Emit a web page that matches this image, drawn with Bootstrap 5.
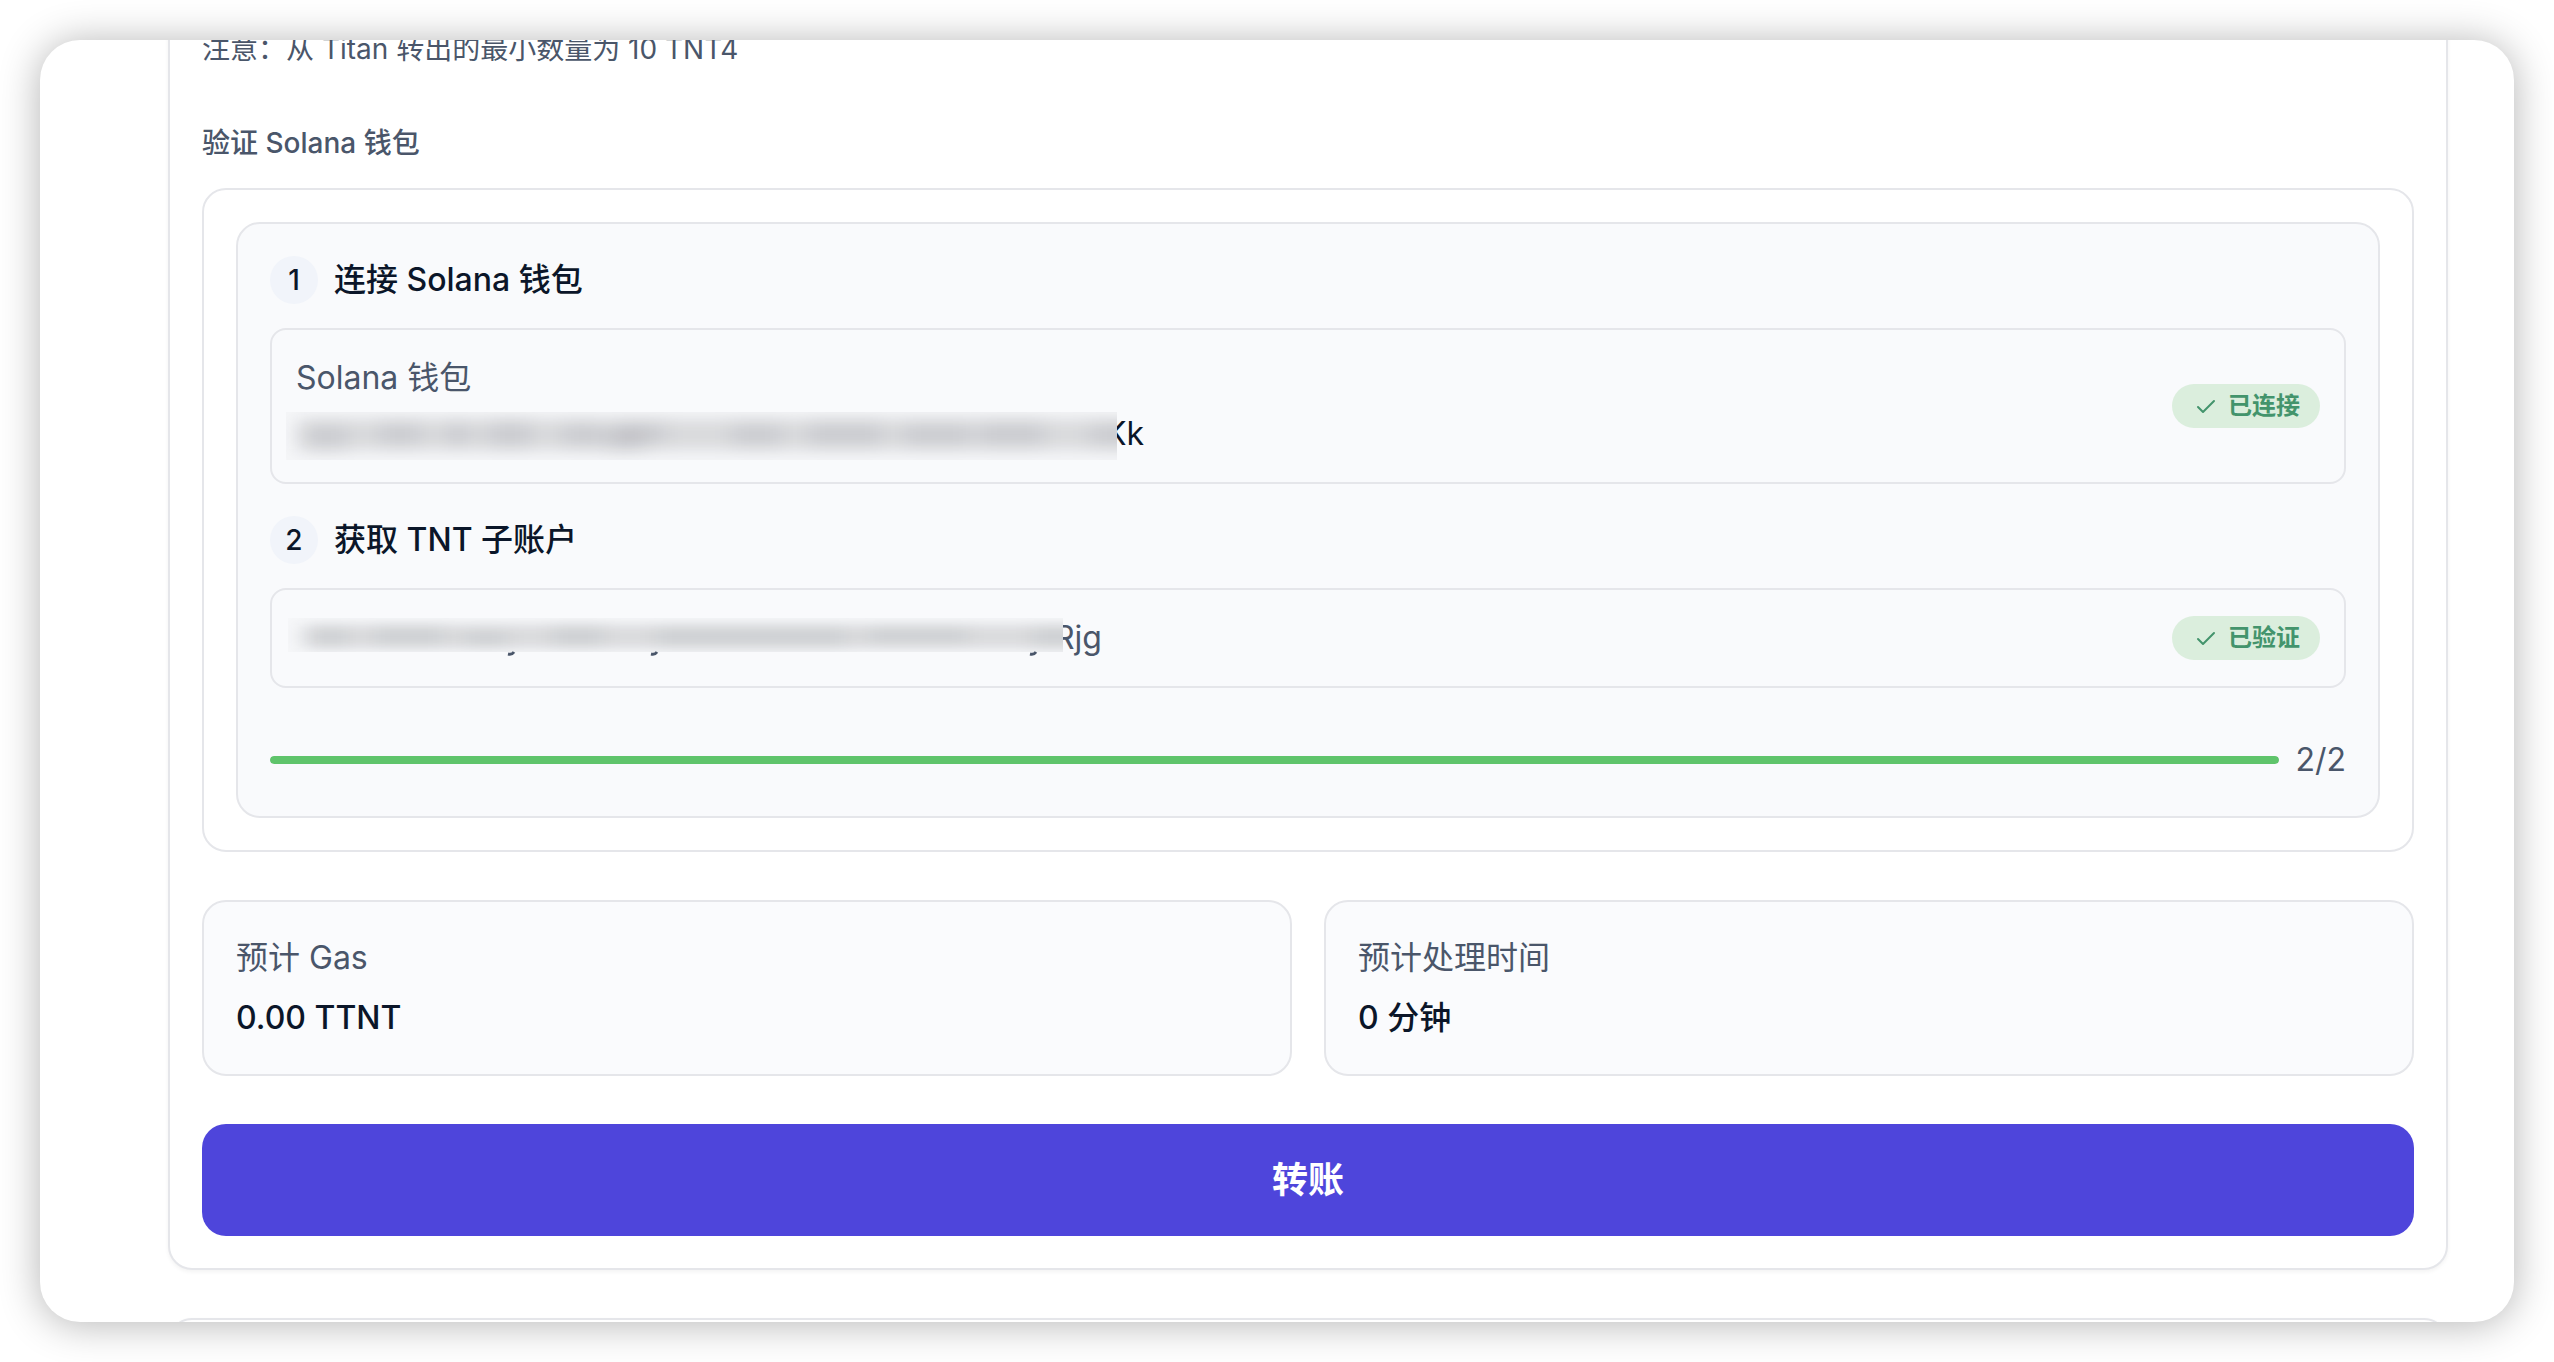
<!DOCTYPE html>
<html lang="zh-CN">
<head>
<meta charset="utf-8">
<meta name="viewport" content="width=device-width, initial-scale=1">
<title>Titan Bridge</title>
<link href="https://cdn.jsdelivr.net/npm/bootstrap@5.3.0/dist/css/bootstrap.min.css" rel="stylesheet">
<style>
  :root { --ink: #0b1629; --slate: #4a566a; --line: #e5e6ea; --soft: #f9fafc; }
  body { background: #fff; color: var(--ink); font-family: Inter, "Noto Sans CJK SC", sans-serif; font-size: 32px; line-height: 48px; }
  .window { height: calc(100vh - 80px); margin: 40px; border-radius: 40px; background: #fff; box-shadow: 0 2px 40px rgba(0,0,0,.3); padding: 0 66px 0 128px; }
  /* the page inside the window is scrolled a little way down */
  .scrolled { margin-top: -46px; gap: 48px; }
  .panel, .frame, .tile { border: 2px solid var(--line); border-radius: 24px; padding: 32px; }
  .panel { background: #fff; box-shadow: 0 2px 4px rgba(0,0,0,.05); }
  .tint { background: var(--soft); }
  .slate { color: var(--slate); }
  .note, .caption-line { font-size: 28px; line-height: 42px; color: var(--slate); margin: 0; }
  .note { margin-bottom: 52px; }
  .caption-line { font-weight: 500; margin-bottom: 24px; }
  .stack { gap: 24px; }
  .stack + .stack { margin-top: 32px; }
  .step-head { gap: 16px; }
  .step-head h2 { font-size: 32px; line-height: 48px; font-weight: 500; margin: 0; }
  .step-no { width: 48px; height: 48px; border-radius: 50%; background: #f1f4fa; font-size: 28px; font-weight: 500; }
  .field { border: 2px solid var(--line); border-radius: 16px; padding: 24px; }
  .field-lines { gap: 8px; }
  .state { background: #dbeedd; color: #43946c; font-size: 24px; line-height: 44px; font-weight: 700; border-radius: 22px; padding: 0 20px; gap: 8px; }
  .masked { height: 48px; margin-left: -10px; }
  .masked svg { position: relative; z-index: 1; flex: none; }
  .mask-wide { margin: 2px -12px -2px 0; }
  .mask-slim { margin: 4px -9px 0 2px; }
  .meter { gap: 16px; margin-top: 48px; }
  .meter .progress { height: 8px; border-radius: 4px; background: #e5e6ea; }
  .meter .progress-bar { background: #5fc46b; border-radius: 4px; }
  .tiles { gap: 32px; margin: 48px 0; }
  .tile { flex: 1 1 0; background: #fafbfd; }
  .tile dt { font-weight: 400; color: var(--slate); margin-bottom: 12px; }
  .tile dd { font-weight: 500; margin: 0; }
  .btn-transfer { --bs-btn-color: #fff; --bs-btn-bg: #4e45db; --bs-btn-hover-color: #fff; --bs-btn-hover-bg: #4338ca; --bs-btn-border-width: 0; --bs-btn-border-radius: 24px; font-size: 36px; line-height: 56px; font-weight: 700; padding: 28px; }
</style>
</head>
<body class="overflow-hidden">
<div class="window overflow-hidden">
  <main class="scrolled d-flex flex-column">
    <section class="panel">
      <p class="note">注意：从 Titan 转出的最小数量为 10 TNT4</p>
      <h1 class="caption-line">验证 Solana 钱包</h1>
      <div class="frame">
        <div class="frame tint">
          <section class="stack d-flex flex-column">
            <div class="step-head d-flex align-items-center">
              <span class="step-no d-flex align-items-center justify-content-center">1</span>
              <h2>连接 Solana 钱包</h2>
            </div>
            <div class="field d-flex align-items-center justify-content-between">
              <div class="field-lines d-flex flex-column">
                <span class="slate">Solana 钱包</span>
                <span class="masked d-flex">
                  <svg class="mask-wide" width="831" height="48" viewBox="0 0 831 48" aria-hidden="true">
                    <defs><filter id="fogA" filterUnits="userSpaceOnUse" x="-40" y="-40" width="960" height="130" color-interpolation-filters="sRGB"><feGaussianBlur stdDeviation="10 8"/></filter></defs>
                    <rect width="831" height="48" fill="#f5f6f8"/>
                    <g filter="url(#fogA)" fill="#16171f">
                      <rect x="12" y="8" width="880" height="29" fill-opacity=".13"/>
                      <g fill-opacity=".06">
                        <rect x="18" y="12" width="44" height="29"/><rect x="92" y="9" width="44" height="26"/>
                        <rect x="160" y="9" width="24" height="26"/><rect x="202" y="7" width="44" height="30"/>
                        <rect x="276" y="10" width="40" height="26"/><rect x="318" y="16" width="40" height="26"/>
                        <rect x="330" y="9" width="50" height="24"/><rect x="446" y="10" width="50" height="26"/>
                        <rect x="522" y="8" width="74" height="28"/><rect x="618" y="10" width="66" height="26"/>
                        <rect x="694" y="8" width="64" height="28"/><rect x="804" y="10" width="70" height="26"/>
                      </g>
                    </g>
                  </svg><span>Kk</span>
                </span>
              </div>
              <span class="state d-flex align-items-center">
                <svg width="28" height="28" viewBox="0 0 28 28" fill="none" stroke="currentColor" stroke-width="2" stroke-linecap="round" stroke-linejoin="round" aria-hidden="true"><path d="M6 15l5 5L22 9"/></svg>已连接</span>
            </div>
          </section>
          <section class="stack d-flex flex-column">
            <div class="step-head d-flex align-items-center">
              <span class="step-no d-flex align-items-center justify-content-center">2</span>
              <h2>获取 TNT 子账户</h2>
            </div>
            <div class="field d-flex align-items-center justify-content-between">
              <span class="masked slate d-flex">
                <svg class="mask-slim" width="775" height="40" viewBox="0 0 775 40" aria-hidden="true">
                  <defs><filter id="fogB" filterUnits="userSpaceOnUse" x="-40" y="-40" width="900" height="120" color-interpolation-filters="sRGB"><feGaussianBlur stdDeviation="10 6"/></filter><clipPath id="slimClip"><rect width="775" height="34"/></clipPath></defs>
                  <g clip-path="url(#slimClip)">
                    <rect width="775" height="34" fill="#f6f7f9"/>
                    <g filter="url(#fogB)" fill="#1c2029">
                      <rect x="15" y="7" width="830" height="23" fill-opacity=".13"/>
                      <g fill-opacity=".05">
                        <rect x="24" y="8" width="36" height="22"/><rect x="86" y="7" width="70" height="22"/>
                        <rect x="176" y="12" width="44" height="18"/><rect x="264" y="6" width="52" height="24"/>
                        <rect x="368" y="8" width="190" height="22"/><rect x="580" y="8" width="100" height="18"/>
                        <rect x="744" y="7" width="60" height="24"/>
                      </g>
                    </g>
                  </g>
                  <path d="M220 36q4 1 6-2M363 36q4 1 6-2M742 36q4 1 6-2" fill="none" stroke="currentColor" stroke-width="3"/>
                </svg><span>Rjg</span>
              </span>
              <span class="state d-flex align-items-center">
                <svg width="28" height="28" viewBox="0 0 28 28" fill="none" stroke="currentColor" stroke-width="2" stroke-linecap="round" stroke-linejoin="round" aria-hidden="true"><path d="M6 15l5 5L22 9"/></svg>已验证</span>
            </div>
          </section>
          <div class="meter d-flex align-items-center">
            <div class="progress flex-grow-1" role="progressbar" aria-label="进度" aria-valuenow="2" aria-valuemin="0" aria-valuemax="2"><div class="progress-bar" style="width:100%"></div></div>
            <span class="slate">2/2</span>
          </div>
        </div>
      </div>
      <div class="tiles d-flex">
        <dl class="tile mb-0"><dt>预计 Gas</dt><dd>0.00 TTNT</dd></dl>
        <dl class="tile mb-0"><dt>预计处理时间</dt><dd>0 分钟</dd></dl>
      </div>
      <button type="button" class="btn btn-transfer w-100 d-block">转账</button>
    </section>
    <section class="panel"></section>
  </main>
</div>
<script src="https://cdn.jsdelivr.net/npm/bootstrap@5.3.0/dist/js/bootstrap.bundle.min.js"></script>
</body>
</html>
